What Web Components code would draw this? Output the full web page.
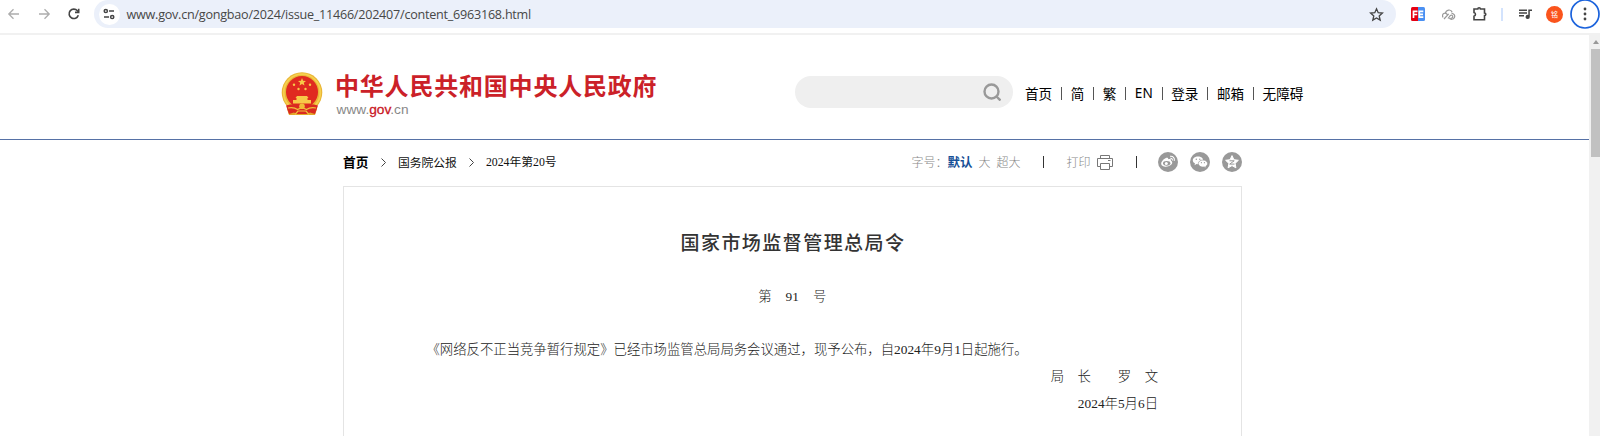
<!DOCTYPE html>
<html lang="zh-CN">
<head>
<meta charset="utf-8">
<title>国家市场监督管理总局令</title>
<style>
html,body{margin:0;height:100%;overflow:hidden;background:#fff}
body{font-family:"Liberation Sans","Noto Sans CJK SC",sans-serif}
</style>
</head>
<body>
<browser-page></browser-page>
<script>
const define = (name, html) => {
  const t = document.createElement('template');
  t.innerHTML = '<style>*{box-sizing:border-box}svg{display:block;flex:none}</style>' + html;
  customElements.define(name, class extends HTMLElement {
    constructor() {
      super();
      this.attachShadow({mode: 'open'}).append(t.content.cloneNode(true));
    }
  });
};

define('browser-toolbar', `
<style>
:host{display:flex;height:35px;border-bottom:2px solid #f1f1f1;align-items:flex-start;background:#fff;padding-left:6px;overflow:hidden}
.nav{display:flex;gap:14px;width:90px;height:28px;align-items:center}
.bar{flex:none;width:1302px;height:28px;background:#ebf0fa;border-radius:14px;display:flex;align-items:center;padding:0 12px 0 3px}
.site{width:21px;height:21px;border-radius:50%;background:#fff;display:grid;place-items:center;flex:none}
.url{flex:1;margin-left:7px;font:12.600px/28px "Open Sans",sans-serif;color:#474747;white-space:nowrap;letter-spacing:-.240px;padding-top:1px}
.ext{display:flex;align-items:center;height:28px;flex:none}
.av{width:17px;height:17px;border-radius:50%;background:#fa541c;color:#fff;font:7px/17px "Noto Sans CJK SC",sans-serif;text-align:center;margin-left:14px}
</style>
<div class="nav">
<svg width="16" height="16" viewBox="0 0 16 16" fill="none" stroke="#adadad" stroke-width="1.3"><path d="M13 8H3M7.5 3.3 2.8 8l4.7 4.7"/></svg>
<svg width="16" height="16" viewBox="0 0 16 16" fill="none" stroke="#adadad" stroke-width="1.3"><path d="M3 8h10M8.5 3.3 13.2 8l-4.7 4.7"/></svg>
<svg width="16" height="16" viewBox="0 0 16 16" fill="none" stroke="#444" stroke-width="1.6"><path d="M12.3 9.2A4.7 4.7 0 1 1 11.4 4.8L12.6 6"/><path d="M12.7 2.7v3.7H9"/></svg>
</div>
<div class="bar"><div class="site" style="margin-left:1.500px"><svg width="12" height="12" viewBox="0 0 12 12" fill="none" stroke="#444" stroke-width="1.5"><circle cx="2.8" cy="3" r="1.6"/><path d="M6 3h5M1 9h5"/><circle cx="9.2" cy="9" r="1.6"/></svg></div>
<div class="url">www.gov.cn/gongbao/2024/issue_11466/202407/content_6963168.html</div>
<svg width="15" height="15" viewBox="0 0 15 15" fill="none" stroke="#444" stroke-width="1.3"><path d="m7.5 1.8 1.7 3.9 4.2.4-3.2 2.8 1 4.2-3.7-2.2-3.7 2.2 1-4.2L1.600 6.100l4.200-.400z"/></svg></div>
<div class="ext">
<svg width="14" height="14" viewBox="0 0 14 14" style="margin-left:15px"><path fill="#e60012" d="M1.500 0H7v14H1.500Q0 14 0 12.500v-11Q0 0 1.500 0"/><path fill="#4a90f2" d="M7 0h5.500Q14 0 14 1.500v11q0 1.500-1.500 1.500H7z"/><path fill="none" stroke="#fff" stroke-width="1.700" d="M2.500 11V4.300h4M2.500 7.500h3.700M12.300 4.300H8.300v5.900h4M8.300 7.300h3.700"/></svg>
<svg width="14" height="14" viewBox="0 0 14 14" style="margin-left:17px" fill="none" stroke="#999" stroke-width="1.200"><path d="M3.600 6.200A3.400 3.400 0 0 1 10.200 5.300M9.500 6.300a3 3 0 1 1-2.200 4.800M1.200 10.400a2.500 2.500 0 1 1 4.200-2.500M2 12l4.700-5.200M8.600 11a1.500 1.500 0 1 0-.2-2.600L6 11.500"/></svg>
<svg width="16" height="16" viewBox="0 0 16 16" style="margin-left:16px" fill="none" stroke="#444" stroke-width="1.600"><path d="M2 3h3.800a1.300 1.300 0 0 1 2.600 0H12.500v4a1.300 1.300 0 0 1 0 2.600V13.700H2v-3.500a1.900 1.900 0 0 0 0-3.700z"/></svg>
<div style="width:2px;height:13px;background:#d3e3fd;margin:0 15px 0 13px"></div>
<svg width="14" height="14" viewBox="0 0 14 14" fill="#444"><path d="M1 2.500h8v1.400H1zM1 5.300h8v1.400H1zM1 8.100h5v1.400H1zM10.300 2.500H14V4h-2.200v6a2.100 2.100 0 1 1-1.500-2z"/></svg>
<div class="av">铭</div>
</div>
<svg width="30" height="30" viewBox="0 0 30 30" style="margin:-1px 0 0 7px"><circle cx="15" cy="15" r="14" fill="none" stroke="#1a62dc" stroke-width="1.700"/><g fill="#444"><circle cx="15" cy="10" r="1.400"/><circle cx="15" cy="15" r="1.400"/><circle cx="15" cy="20" r="1.400"/></g></svg>
`);

define('national-emblem', `
<style>:host{display:block;width:42px;height:44px}</style>
<svg width="42" height="44" viewBox="0 0 42 44">
<circle cx="21" cy="20.500" r="20.300" fill="#e9b535"/><circle cx="21" cy="20.500" r="18.300" fill="none" stroke="#f6d04f" stroke-width="1.800"/>
<path fill="#e2a92b" d="M8 33h26l2 4-2 6H8l-2-6z"/>
<circle cx="21" cy="20" r="16" fill="#e02a20"/>
<g fill="#f7c948"><path d="m21 6 1.100 2.700 2.900.2-2.200 1.900.7 2.800-2.500-1.500-2.500 1.500.7-2.800-2.200-1.900 2.900-.2z"/><circle cx="13" cy="12.800" r="1.200"/><circle cx="29" cy="12.800" r="1.200"/><circle cx="17.500" cy="17" r="1.200"/><circle cx="24.500" cy="17" r="1.200"/>
<path d="M16 24h10l1.500 2h-13zM15.500 26h11v2h-11zM12 28h18v3.500H12z"/></g>
<path fill="#da2a20" d="M5 33.500q6-2 11-1h10q5-1 11 1l-3 8.500-5-1.500-2.500 1.500H15.500L13 40.500 8 42z"/>
<path fill="none" stroke="#f0c23d" stroke-width="1.200" d="M7 36q6-1 9.500 1.500l4.500-2 4.500 2Q29 35 35 36M14 42.500l3-3.500h8l3 3.500"/><circle cx="21" cy="34.300" r="2.800" fill="#f0bd38"/>
</svg>`);

define('nav-links', `
<style>:host{display:flex;align-items:center;font:13.600px/20px "Noto Sans CJK SC",sans-serif;color:#000;white-space:nowrap}
i{width:1px;height:13px;background:#555;margin:2px 8.700px 0 8.800px}.en{font-family:"Noto Sans",sans-serif;padding-top:1px}</style>
<span>首页</span><i></i><span>简</span><i></i><span>繁</span><i></i><span class="en">EN</span><i></i><span>登录</span><i></i><span>邮箱</span><i></i><span>无障碍</span>`);

define('site-header', `
<style>
:host{display:flex;height:105px;border-bottom:1px solid #5671a6;padding-left:281px;align-items:flex-start}
national-emblem{margin-top:36.500px}
.name{width:460px;margin:32px 0 0 12px;white-space:nowrap}
.cn{font:bold 24px/36px "Noto Sans CJK SC",sans-serif;letter-spacing:.800px;color:#cb2128}
.en{font:13.700px/16px "Liberation Sans",sans-serif;color:#888;margin:-1px 0 0 1.500px}.en b{font-weight:normal;color:#c9151e;-webkit-text-stroke:.300px #c9151e}
.search{width:218px;height:32px;border-radius:16px;background:#efefef;margin-top:41px;display:flex;align-items:center;justify-content:flex-end;padding-right:12px}
nav-links{margin:47px 0 0 12px}
</style>
<national-emblem></national-emblem>
<div class="name"><div class="cn">中华人民共和国中央人民政府</div><div class="en">www.<b>gov</b>.cn</div></div>
<div class="search"><svg width="18" height="18" viewBox="0 0 18 18" fill="none" stroke="#999" stroke-width="2.400"><circle cx="8.500" cy="8.500" r="7"/><path d="m13.500 13.500 4 4"/></svg></div>
<nav-links></nav-links>`);

define('page-tools', `
<style>
:host{display:flex;align-items:center;height:46px;font:12px/20px "Noto Sans CJK SC",sans-serif;color:#111;white-space:nowrap;width:898.500px;padding-bottom:2px}
b{color:#000}.c{margin:1px 12px 0}.g{color:#888;font-weight:300;display:flex;align-items:center;margin-left:auto}
.g b{color:#164f96;font-size:12.500px;font-weight:700}i{width:1px;height:12px;background:#333}
</style>
<b style="font-size:12.700px">首页</b>
<svg class="c" style="margin-left:12.500px" width="5" height="9" viewBox="0 0 5 9" fill="none" stroke="#444"><path d="m.5.500 4 4-4 4"/></svg>
<span style="font-size:11.800px">国务院公报</span>
<svg class="c" width="5" height="9" viewBox="0 0 5 9" fill="none" stroke="#444"><path d="m.5.500 4 4-4 4"/></svg>
<span style="font-family:'Liberation Serif','Noto Sans CJK SC',serif;font-size:11.800px">2024年第20号</span>
<div class="g"><span>字号：</span><b>默认</b><span style="margin-left:6px">大</span><span style="margin-left:6px">超大</span><i style="margin:0 22px 0 23px"></i><span>打印</span>
<svg width="16" height="15" viewBox="0 0 16 15" fill="none" stroke="#777" style="margin-left:6px"><path d="M3.500 3.500v-3h9v3M3.500 11.500h-3v-8h15v8h-3M3.500 8.500h9v6h-9zM11 5.500h2.500"/></svg>
<i style="margin:0 21px 0 23px"></i>
<svg width="20" height="20" viewBox="0 0 20 20"><circle cx="10" cy="10" r="10" fill="#999"/><path fill="#fff" d="M8.300 5.800c1.300-.5 2.200.2 1.800 1.500 2-.7 3.300-.1 2.800 1.500 2.600 1 1.500 4.800-3.500 5.800C6 15 3 13.600 3.200 11.400c.2-2 3-4.800 5.100-5.600z"/><ellipse cx="8.700" cy="11.300" rx="3.700" ry="2.400" fill="#999"/><circle cx="8.300" cy="11.500" r="1.500" fill="#fff"/><path fill="none" stroke="#fff" stroke-width="1.100" d="M12 4.300c3-.5 5 1.700 4.200 4.500M12.300 6.300c1.500-.2 2.400.8 2 2.200"/></svg>
<svg width="20" height="20" viewBox="0 0 20 20" style="margin-left:12px"><circle cx="10" cy="10" r="10" fill="#999"/><path fill="#fff" d="M8 4.500c3 0 5.200 1.700 5.200 3.900S11 12.300 8 12.300l-1.500-.2-2 1.100.5-1.800c-1.400-.8-2.200-1.800-2.200-3C2.800 6.200 5 4.500 8 4.500z"/><path fill="#fff" stroke="#999" stroke-width=".7" d="M12.900 8c2.600 0 4.700 1.600 4.700 3.600 0 1.100-.7 2-1.800 2.700l.4 1.600-1.900-1-1.400.2c-2.600 0-4.600-1.600-4.600-3.500S10.300 8 12.900 8z"/><g fill="#999"><circle cx="6.300" cy="7.300" r=".7"/><circle cx="9.800" cy="7.300" r=".7"/><circle cx="11.400" cy="10.700" r=".6"/><circle cx="14.400" cy="10.700" r=".6"/></g></svg>
<svg width="20" height="20" viewBox="0 0 20 20" style="margin-left:12px"><circle cx="10" cy="10" r="10" fill="#999"/><path fill="#fff" stroke="#fff" stroke-linejoin="round" d="m10 3.600 1.900 4.100 4.500.6-3.300 3.100.8 4.400-3.900-2.200-3.900 2.200.8-4.400-3.300-3.100 4.500-.6z"/><path fill="none" stroke="#999" stroke-width="1" d="M7.500 8.800h4.700l-4.500 3.300h4.800"/></svg>
</div>`);

define('gazette-article', `
<style>
:host{display:flex;flex-direction:column;width:899px;height:252px;border:1px solid #e4e4e4;border-bottom:0;padding:0 83px 0 82.500px;color:#222;font:13.360px/26.800px "Liberation Serif","Noto Sans CJK SC",serif;font-weight:300;white-space:nowrap}
h1{font-size:19px;line-height:28px;font-weight:500;letter-spacing:1.450px;text-align:center;margin:43px -1.500px 0 0;color:#333}
.no{display:flex;justify-content:center;gap:14px;margin:26px 0 26.600px}
.r{display:flex;justify-content:flex-end}
</style>
<h1>国家市场监督管理总局令</h1>
<div class="no"><span>第</span><span>91</span><span>号</span></div>
<div class="p">《网络反不正当竞争暂行规定》已经市场监管总局局务会议通过，现予公布，自2024年9月1日起施行。</div>
<div class="r"><span>局</span><span style="margin-left:13.500px">长</span><span style="margin-left:26.900px">罗</span><span style="margin-left:13.500px">文</span></div>
<div class="r">2024年5月6日</div>`);

define('scroll-bar', `
<style>:host{display:flex;flex-direction:column;width:11px;background:#f1f1f1;align-items:flex-end}
svg{margin:5px 0 5px}.t{width:9px;height:108px;background:#c1c1c1}</style>
<svg width="9" height="4" viewBox="0 0 9 4"><path fill="#999" d="M2 4 5 0l3 4z"/></svg><div class="t"></div>`);

define('browser-page', `
<style>:host{display:flex;flex-direction:column;height:436px;width:1600px;overflow:hidden}
.v{display:flex;height:401px}.m{width:1589px}.w{margin-left:343px}</style>
<browser-toolbar></browser-toolbar>
<div class="v"><div class="m"><site-header></site-header><div class="w"><page-tools></page-tools><gazette-article></gazette-article></div></div><scroll-bar></scroll-bar></div>`);
</script>
</body>
</html>
